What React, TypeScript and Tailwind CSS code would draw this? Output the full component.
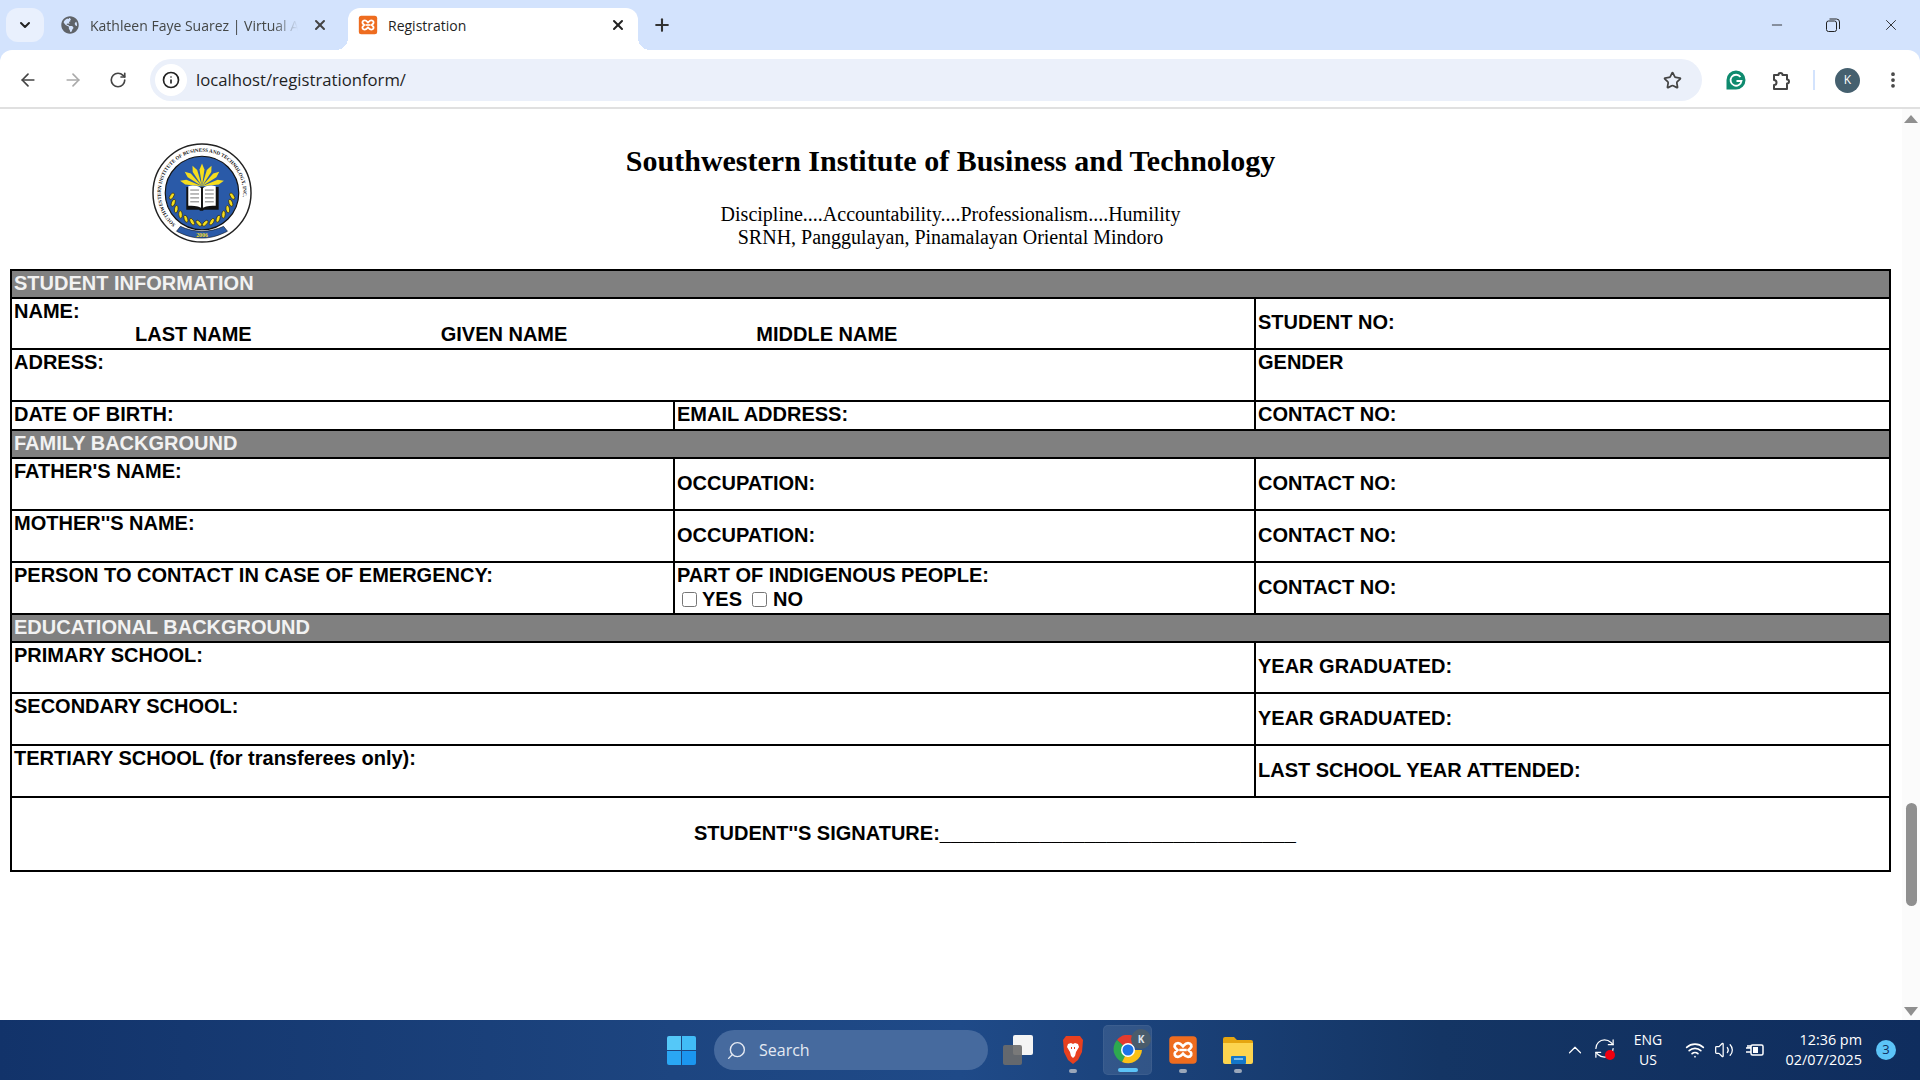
import { ArrowLeft, ArrowRight, RotateCw, RefreshCw, Info, Star, EllipsisVertical, ChevronDown, ChevronUp, X, Plus, Minus, Search, Wifi, Volume2 } from 'lucide-react';
import { FaGlobeAmericas } from 'react-icons/fa';

const base = 'border-2 border-black pr-px';
const cell = `${base} pl-[2px] pt-0 pb-[2px]`;
const top = `${base} pl-[2px] pt-px pb-0 align-top`;

function XamppIcon({ size = 20 }: { size?: number }) {
  return (
    <svg width={size} height={size} viewBox="0 0 24 24">
      <rect x="1" y="1" width="22" height="22" rx="3" fill="#ee6c1f" />
      <path d="M8 6.500c2 0 3 1.500 4 2.500 1-1 2-2.500 4-2.500 2.500 0 3.500 2.500 2 4L16.500 12l1.500 1.500c1.500 1.500.5 4-2 4-2 0-3-1.500-4-2.500-1 1-2 2.500-4 2.500-2.500 0-3.500-2.500-2-4L7.500 12 6 10.500c-1.500-1.500-.5-4 2-4Z" fill="none" stroke="#fff" strokeWidth="2.200" />
      <path d="M9 12h6" stroke="#fff" strokeWidth="2" />
    </svg>
  );
}

function Logo() {
  const rays = [-76, -50, -25, 0, 25, 50, 76];
  const leaves = [0, 1, 2, 3, 4, 5, 6];
  return (
    <svg width="100" height="100" viewBox="0 0 102 102">
      <circle cx="51" cy="51" r="50" fill="#fff" stroke="#222" strokeWidth="1.500" />
      <circle cx="51" cy="51" r="37.500" fill="#2a5aa8" stroke="#111" strokeWidth="1.200" />
      <defs>
        <path id="ring" d="M24 83A42 42 0 1 1 78 83" />
      </defs>
      <text fontFamily="Liberation Serif, serif" fontSize="5.200" fontWeight="700" fill="#111">
        <textPath href="#ring" startOffset="0">SOUTHWESTERN INSTITUTE OF BUSINESS AND TECHNOLOGY, INC.</textPath>
      </text>
      {rays.map(r => (
        <path key={r} d="M51 44 L48.500 27 L51 21 L53.500 27 Z" fill="#f5dd1e" transform={`rotate(${r} 51 44)`} />
      ))}
      <path d="M38 45h33v23H56l-1 1h-3l-1-1H38Z" fill="#111" transform="translate(-3 0)" />
      <path d="M37 44c4-1 9-1 13 2v20c-4-2-9-2-13-2ZM65 44c-4-1-9-1-13 2v20c4-2 9-2 13-2Z" fill="#fff" />
      <path d="M39 48h9M39 52h9M39 56h9M39 60h9M54 48h9M54 52h9M54 56h9M54 60h9" stroke="#777" strokeWidth="1" />
      {leaves.map(i => (
        <g key={i}>
          <ellipse cx="51" cy="20" rx="1.800" ry="3.800" fill="#f5dd1e" stroke="#111" strokeWidth=".6" transform={`rotate(${96 + i * 13} 51 51) rotate(50 51 20)`} />
          <ellipse cx="51" cy="20" rx="1.800" ry="3.800" fill="#f5dd1e" stroke="#111" strokeWidth=".6" transform={`rotate(${-96 - i * 13} 51 51) rotate(-50 51 20)`} />
        </g>
      ))}
      <path d="M25 90c8 4 16 7 26 7s18-3 26-7l-4-5c-6 3-14 5-22 5s-16-2-22-5Z" fill="#2a5aa8" stroke="#111" strokeWidth=".6" />
      <text x="51" y="96" textAnchor="middle" fontFamily="Liberation Serif, serif" fontSize="6" fontWeight="700" fill="#f5dd1e">2006</text>
    </svg>
  );
}

function BrowserChrome() {
  return (
    <div className="shrink-0 bg-[#d3e3fd] font-['Open_Sans',sans-serif] text-[14px]">
      <div className="flex h-[50px] items-end">
        <div className="mb-2 ml-1.5 flex h-[34px] w-[38px] items-center justify-center rounded-xl bg-[#e9f0fd]">
          <ChevronDown size={16} strokeWidth={3} className="text-[#222]" />
        </div>
        <div className="mb-[10px] ml-[17px] flex h-[30px] w-[272px] items-center">
          <FaGlobeAmericas size={18} className="text-[#5f6368]" />
          <span className="ml-[11px] w-[208px] overflow-hidden whitespace-nowrap text-[#444746] [mask-image:linear-gradient(to_right,#000_88%,transparent)]">Kathleen Faye Suarez | Virtual A</span>
          <X size={16} strokeWidth={3} className="ml-[14px] shrink-0 text-[#444]" />
        </div>
        <div className="relative ml-[15px] flex h-[42px] w-[290px] items-center rounded-t-xl bg-white pb-[8px] pl-[10px]">
          <div className="absolute -left-3 bottom-0 h-3 w-3 bg-[radial-gradient(circle_at_0_0,transparent_12px,#fff_12px)]" />
          <div className="absolute -right-3 bottom-0 h-3 w-3 bg-[radial-gradient(circle_at_100%_0,transparent_12px,#fff_12px)]" />
          <XamppIcon />
          <span className="ml-[10px] text-[#1f1f1f]">Registration</span>
          <X size={16} strokeWidth={3} className="ml-auto mr-[12px] text-[#222]" />
        </div>
        <Plus size={20} strokeWidth={2.500} className="mb-[15px] ml-[14px] text-[#333]" />
        <div className="mb-[16px] ml-auto flex items-center text-[#222]">
          <Minus size={16} strokeWidth={1.300} className="mr-[41px]" />
          <svg width="14" height="14" viewBox="0 0 14 14" fill="none" stroke="#222" strokeWidth="1" className="mr-[42px]"><rect x=".5" y="3" width="10" height="10.500" rx="2" /><path d="M3.500 1h7a3 3 0 0 1 3 3v7" /></svg>
          <X size={18} strokeWidth={1.200} className="mr-[20px]" />
        </div>
      </div>
      <div className="flex h-[59px] items-center rounded-t-xl border-b-2 border-[#e0e0e0] bg-white pt-[3px]">
        <ArrowLeft size={20} strokeWidth={2} className="ml-[18px] text-[#444]" />
        <ArrowRight size={20} strokeWidth={2} className="ml-[25px] text-[#aaa]" />
        <RotateCw size={18} strokeWidth={2.200} className="ml-[26px] text-[#444]" />
        <div className="ml-[23px] flex h-[42px] w-[1552px] items-center rounded-full bg-[#ebf0fa] pl-[5px]">
          <div className="flex h-8 w-8 items-center justify-center rounded-full bg-white">
            <Info size={18} strokeWidth={2.200} className="text-[#222]" />
          </div>
          <span className="ml-[9px] text-[16.700px] text-[#1f1f1f]">localhost/registrationform/</span>
          <Star size={19} strokeWidth={2.200} className="ml-auto mr-[20px] text-[#444]" />
        </div>
        <svg width="20" height="20" viewBox="0 0 20 20" className="ml-[24px]"><path d="M10 .5a9.500 9.500 0 0 1 0 19H.5V10A9.500 9.500 0 0 1 10 .5Z" fill="#0e8a6e" /><path d="M14.500 7A5.500 5.500 0 1 0 15.500 11H10.500" fill="none" stroke="#fff" strokeWidth="1.800" /></svg>
        <svg width="21" height="21" viewBox="0 0 21 21" fill="none" stroke="#444" strokeWidth="2" strokeLinejoin="round" className="ml-[26px]"><path d="M2 5h4.500a2 2 0 0 1 4 0H15v4.500a2 2 0 0 1 0 4V19H2v-4a2.500 2.500 0 0 0 0-5Z" /></svg>
        <div className="ml-[20px] h-5 w-0.5 bg-[#d3e3fd]" />
        <div className="ml-[20px] flex h-[25px] w-[25px] items-center justify-center rounded-full bg-[#45606f] text-[12px] text-white">K</div>
        <EllipsisVertical size={20} strokeWidth={2.500} className="ml-[23px] text-[#444]" />
      </div>
    </div>
  );
}

function Registration() {
  return (
    <main className="flex min-w-0 flex-1 flex-col pl-[10px] font-['Liberation_Sans',Arial,sans-serif] text-[20px] font-bold leading-[23px] text-black">
      <div className="relative h-[160px] w-[1881px] text-center font-['Liberation_Serif','Times_New_Roman',serif] font-normal">
        <div className="absolute left-[142px] top-[34px]"><Logo /></div>
        <h1 className="pt-[34px] text-[30px] font-bold leading-[36px]">Southwestern Institute of Business and Technology</h1>
        <p className="pt-[24px] text-[20px] leading-[23px]">Discipline....Accountability....Professionalism....Humility</p>
        <p className="text-[20px] leading-[23px]">SRNH, Panggulayan, Pinamalayan Oriental Mindoro</p>
      </div>
      <table className="w-[1879px] table-fixed border-collapse border-2 border-black">
        <colgroup>
          <col className="w-[663px]" />
          <col className="w-[581px]" />
          <col className="w-[635px]" />
        </colgroup>
        <tbody>
          <tr className="h-[28px] bg-[#808080] text-[#f2f2f2]"><td colSpan={3} className={cell}>STUDENT INFORMATION</td></tr>
          <tr className="h-[51px]">
            <td colSpan={2} className={top}>
              <div>NAME:</div>
              <div className="flex gap-[189px] pl-[121px]"><span>LAST NAME</span><span>GIVEN NAME</span><span>MIDDLE NAME</span></div>
            </td>
            <td className={cell}>STUDENT NO:</td>
          </tr>
          <tr className="h-[52px]">
            <td colSpan={2} className={top}>ADRESS:</td>
            <td className={top}>GENDER</td>
          </tr>
          <tr className="h-[29px]">
            <td className={cell}>DATE OF BIRTH:</td>
            <td className={cell}>EMAIL ADDRESS:</td>
            <td className={cell}>CONTACT NO:</td>
          </tr>
          <tr className="h-[28px] bg-[#808080] text-[#f2f2f2]"><td colSpan={3} className={cell}>FAMILY BACKGROUND</td></tr>
          <tr className="h-[52px]">
            <td className={top}>FATHER'S NAME:</td>
            <td className={cell}>OCCUPATION:</td>
            <td className={cell}>CONTACT NO:</td>
          </tr>
          <tr className="h-[52px]">
            <td className={top}>MOTHER''S NAME:</td>
            <td className={cell}>OCCUPATION:</td>
            <td className={cell}>CONTACT NO:</td>
          </tr>
          <tr className="h-[52px]">
            <td className={top}>PERSON TO CONTACT IN CASE OF EMERGENCY:</td>
            <td className={top}>
              <div>PART OF INDIGENOUS PEOPLE:</div>
              <div className="flex items-center pt-px">
                <input type="checkbox" className="ml-[5px] mr-[5px] h-[15px] w-[15px]" />
                <span>YES</span>
                <input type="checkbox" className="ml-[10px] mr-[6px] h-[15px] w-[15px]" />
                <span>NO</span>
              </div>
            </td>
            <td className={cell}>CONTACT NO:</td>
          </tr>
          <tr className="h-[28px] bg-[#808080] text-[#f2f2f2]"><td colSpan={3} className={cell}>EDUCATIONAL BACKGROUND</td></tr>
          <tr className="h-[51px]">
            <td colSpan={2} className={top}>PRIMARY SCHOOL:</td>
            <td className={cell}>YEAR GRADUATED:</td>
          </tr>
          <tr className="h-[52px]">
            <td colSpan={2} className={top}>SECONDARY SCHOOL:</td>
            <td className={cell}>YEAR GRADUATED:</td>
          </tr>
          <tr className="h-[52px]">
            <td colSpan={2} className={top}>TERTIARY SCHOOL (for transferees only):</td>
            <td className={cell}>LAST SCHOOL YEAR ATTENDED:</td>
          </tr>
          <tr className="h-[74px]">
            <td colSpan={3} className={`${base} pb-[2px] pl-[682px] pt-0`}>STUDENT''S SIGNATURE:________________________________</td>
          </tr>
        </tbody>
      </table>
    </main>
  );
}

function Scrollbar() {
  return (
    <div className="flex w-[18px] shrink-0 flex-col items-center bg-[#fbfbfb]">
      <div className="mt-[6px] h-0 w-0 border-x-[7px] border-b-[8px] border-x-transparent border-b-[#8f8f8f]" />
      <div className="mt-[680px] h-[103px] w-[11px] rounded-full bg-[#8f8f8f]" />
      <div className="mt-[101px] h-0 w-0 border-x-[7px] border-t-[9px] border-x-transparent border-t-[#8f8f8f]" />
    </div>
  );
}

function Taskbar() {
  return (
    <div className="relative flex h-[60px] shrink-0 items-center bg-[linear-gradient(90deg,#12336a_0%,#1d4580_35%,#1f4a88_50%,#143564_75%,#0f2d5e_100%)] font-['Open_Sans',sans-serif] text-white">
      <div className="ml-[667px] grid grid-cols-2 gap-[1px]">
        <div className="h-[14px] w-[14px] rounded-tl-[2px] bg-[#55c8f8]" />
        <div className="h-[14px] w-[14px] rounded-tr-[2px] bg-[#41bcf7]" />
        <div className="h-[14px] w-[14px] rounded-bl-[2px] bg-[#2aa7f4]" />
        <div className="h-[14px] w-[14px] rounded-br-[2px] bg-[#1b96f0]" />
      </div>
      <div className="ml-[18px] flex h-10 w-[274px] items-center rounded-full bg-[#466a9e] pl-[12px] text-[16px] text-[#e4e9f2]">
        <Search size={21} strokeWidth={1.600} className="-scale-x-100" />
        <span className="ml-[12px]">Search</span>
      </div>
      <div className="relative ml-[15px] h-[30px] w-[30px]">
        <div className="absolute right-0 top-0 h-5 w-5 rounded-[2px] bg-[#f4f4f4]" />
        <div className="absolute bottom-0 left-0 h-5 w-[19px] rounded-[2px] bg-[#6b6b6b]/90" />
      </div>
      <div className="relative ml-[28px] flex h-[60px] w-[24px] items-center justify-center">
        <svg width="24" height="30" viewBox="0 0 24 30"><path d="M5 1h14l3 4-1 12-4 8-5 4-5-4-4-8L2 5Z" fill="#e8401f" /><path d="M7 9l3-1 2 1 2-1 3 1 1 3-3 5-1 4-2 2-2-2-1-4-3-5Z" fill="#fff" /><path d="M10 13h1M13 13h1" stroke="#e8401f" strokeWidth="2" /></svg>
        <div className="absolute bottom-[7px] h-[4px] w-2 rounded-full bg-[#9aa7ba]" />
      </div>
      <div className="relative ml-[18px] flex h-[50px] w-[49px] items-center justify-center rounded-[5px] border border-white/5 bg-white/10">
        <svg width="30" height="30" viewBox="0 0 30 30">
          <path d="M15 15 4 5a14 14 0 0 1 24 4H15Z" fill="#e33b2e" />
          <path d="M15 15 9 27A14 14 0 0 1 4 5Z" fill="#2da94f" />
          <path d="M15 15h14a14 14 0 0 1-20 12Z" fill="#fbc116" />
          <circle cx="15" cy="15" r="7" fill="#fff" />
          <circle cx="15" cy="15" r="5.500" fill="#1a73e8" />
        </svg>
        <div className="absolute right-0 top-[3px] flex h-5 w-5 items-center justify-center rounded-full bg-[#4a5c6c] text-[10px] font-bold text-[#dfe6ec]">K</div>
        <div className="absolute bottom-[2px] h-1 w-5 rounded-full bg-[#5cc4f8]" />
      </div>
      <div className="relative ml-[19px] flex h-[60px] w-[24px] items-center justify-center">
        <div className="shrink-0"><XamppIcon size={30} /></div>
        <div className="absolute bottom-[7px] h-[4px] w-2 rounded-full bg-[#9aa7ba]" />
      </div>
      <div className="relative ml-[28px] flex h-[60px] w-[30px] items-center justify-center">
        <svg width="32" height="28" viewBox="0 0 32 28" className="shrink-0"><path d="M1 3a2 2 0 0 1 2-2h9l3 3h14a2 2 0 0 1 2 2v4H1Z" fill="#e5a50f" /><path d="M1 7h30v19a2 2 0 0 1-2 2H3a2 2 0 0 1-2-2Z" fill="#fcd44f" /><rect x="9" y="20" width="15" height="8" rx="1" fill="#1477c9" /><path d="M12 23h9" stroke="#9fd5fa" strokeWidth="1.500" /></svg>
        <div className="absolute bottom-[7px] h-[4px] w-2 rounded-full bg-[#9aa7ba]" />
      </div>
      <div className="ml-auto flex items-center">
        <ChevronUp size={22} strokeWidth={1.300} />
        <div className="relative ml-[7px] h-[26px] w-[24px]">
          <RefreshCw size={23} strokeWidth={1.300} />
          <div className="absolute bottom-[3px] right-[2px] h-2.5 w-2.5 rounded-full bg-[#f00010]" />
        </div>
        <div className="ml-[15px] w-[32px] text-center text-[14px] leading-[20px]">ENG<br />US</div>
        <Wifi size={20} strokeWidth={2} className="ml-[21px]" />
        <Volume2 size={20} strokeWidth={1.500} className="ml-[9px]" />
        <svg width="20" height="20" viewBox="0 0 20 20" fill="none" stroke="#fff" strokeWidth="1.500" className="ml-[11px]"><rect x="6" y="5" width="12" height="10" rx="1.500" /><rect x="8" y="7" width="5" height="6" fill="#fff" stroke="none" /><path d="M1 8h5M1 12h5M3 5v3M5 5v3" /></svg>
        <div className="ml-[19px] w-[78px] text-right text-[14.400px] leading-[20px]">12:36 pm<br />02/07/2025</div>
        <div className="ml-[14px] mr-[24px] flex h-5 w-5 items-center justify-center rounded-full bg-[#5cc4f8] text-[13px] text-[#0f2d5e]">3</div>
      </div>
    </div>
  );
}

export default function App() {
  return (
    <div className="flex h-screen w-full flex-col overflow-hidden bg-white">
      <BrowserChrome />
      <div className="flex min-h-0 flex-1">
        <Registration />
        <Scrollbar />
      </div>
      <Taskbar />
    </div>
  );
}
